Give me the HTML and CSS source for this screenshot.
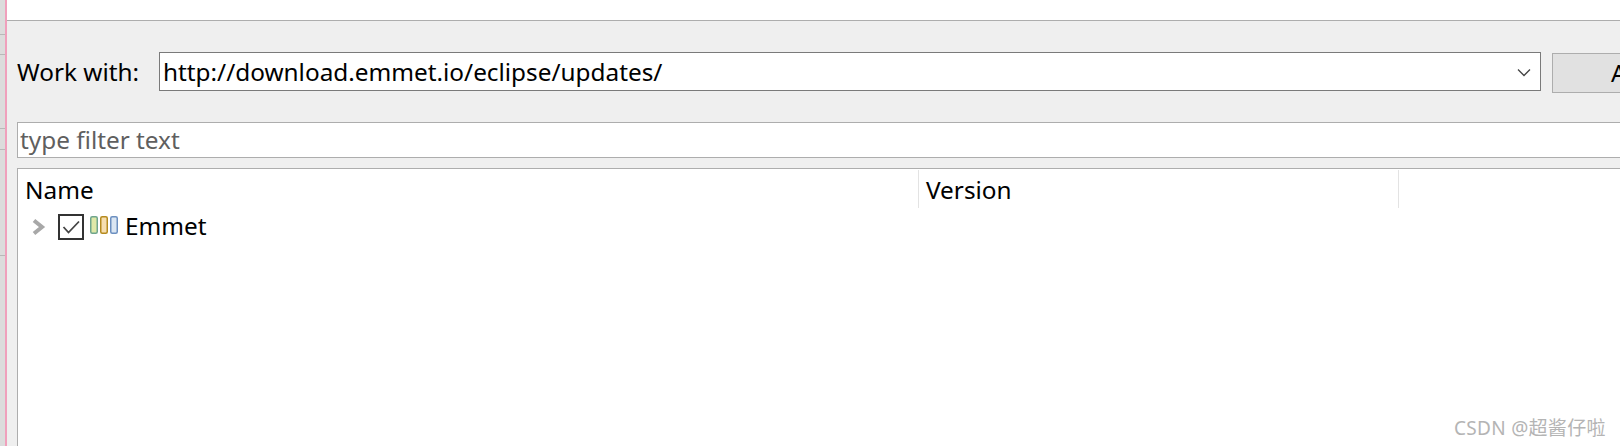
FILE: index.html
```html
<!DOCTYPE html>
<html lang="en">
<head>
    <title>Install</title>
    <meta charset="UTF-8">
    <link rel="stylesheet" href="styles.css">
</head>
<body>
    <div class="rail">
        <div class="notch n1"></div>
        <div class="notch n2"></div>
        <div class="notch n3"></div>
        <div class="notch n4"></div>
        <div class="notch n5"></div>
    </div>
    <div class="main">
        <div class="top"></div>
        <div class="work">
            <span class="work-label">Work with:</span>
            <div class="combo">
                <span class="combo-text">http://download.emmet.io/eclipse/updates/</span>
                <svg class="chevron" width="14" height="9" viewBox="0 0 14 9">
                    <path d="M1 1.5 L7 7.5 L13 1.5" fill="none" stroke="#444" stroke-width="1.3"/>
                </svg>
            </div>
            <div class="add">Add...</div>
        </div>
        <div class="filter">type filter text</div>
        <div class="tree">
            <div class="tree-head">
                <div class="col col-name">Name</div>
                <div class="col col-version">Version</div>
            </div>
            <div class="row">
                <svg class="twisty" width="16" height="18" viewBox="0 0 16 18">
                    <path d="M3 2.5 L11 9 L3 15.5" fill="none" stroke="#a8a8a8" stroke-width="4"/>
                </svg>
                <svg class="check" width="26" height="26" viewBox="0 0 26 26">
                    <rect x="1" y="1" width="24" height="24" fill="#fff" stroke="#333" stroke-width="2"/>
                    <path d="M5.5 13 L10.5 18.5 L21 7.5" fill="none" stroke="#444" stroke-width="1.8"/>
                </svg>
                <svg class="bars" width="28" height="18" viewBox="0 0 28 18">
                    <rect x="0.75" y="0.75" width="6.5" height="16.5" rx="1.5" fill="#dfe8a8" stroke="#6fa58c" stroke-width="1.5"/>
                    <rect x="10.75" y="0.75" width="6.5" height="16.5" rx="1.5" fill="#f6deb0" stroke="#b58a1e" stroke-width="1.5"/>
                    <rect x="20.75" y="0.75" width="6.5" height="16.5" rx="1.5" fill="#dbe6f2" stroke="#6c8fc0" stroke-width="1.5"/>
                </svg>
                <span class="row-text">Emmet</span>
            </div>
        </div>
    </div>
    <div class="watermark">CSDN @超酱仔啦</div>
</body>
</html>
```

FILE: styles.css
```css
html, body{
    margin: 0;
    padding: 0;
    height: 446px;
    overflow: hidden;
}

body{
    position: relative;
    display: flex;
    font-family: "Noto Sans", "Noto Sans CJK SC", sans-serif;
    font-size: 24.35px;
    color: #000000;
    background-color: #efefef;
}

.rail{
    position: relative;
    width: 5px;
    background-color: #dcdcdc;
    border-right: 2px solid #f0a0bc;
    flex: none;
}

.notch{
    position: absolute;
    left: 0;
    width: 5px;
    height: 1px;
    background-color: #b8b8b8;
}

.n1{ top: 34px; }
.n2{ top: 54px; }
.n3{ top: 128px; }
.n4{ top: 149px; }
.n5{ top: 255px; }

.main{
    flex: 1;
    min-width: 0;
    display: flex;
    flex-direction: column;
}

.top{
    height: 20px;
    background-color: #ffffff;
    border-bottom: 1px solid #adadad;
    flex: none;
}

.work{
    height: 101px;
    flex: none;
    display: flex;
    align-items: flex-start;
    padding-left: 10px;
    padding-top: 31px;
    box-sizing: border-box;
}

.work-label{
    width: 142px;
    line-height: 39px;
    flex: none;
}

.combo{
    width: 1382px;
    height: 39px;
    flex: none;
    box-sizing: border-box;
    border: 1px solid #7a7a7a;
    background-color: #ffffff;
    display: flex;
    align-items: center;
    justify-content: space-between;
    padding: 0 9px 0 3px;
    line-height: 37px;
}

.chevron{
    margin-top: 1px;
}

.add{
    width: 120px;
    height: 40px;
    flex: none;
    margin-left: 11px;
    margin-top: 1px;
    box-sizing: border-box;
    border: 1px solid #adadad;
    background-color: #e1e1e1;
    padding-left: 58px;
    line-height: 38px;
    white-space: nowrap;
}

.filter{
    height: 36px;
    flex: none;
    margin-left: 10px;
    box-sizing: border-box;
    border: 1px solid #adadad;
    border-right: none;
    background-color: #ffffff;
    color: #5f5f5f;
    padding-left: 2px;
    line-height: 34px;
}

.tree{
    flex: 1;
    margin-top: 10px;
    margin-left: 10px;
    border-top: 1px solid #adadad;
    border-left: 1px solid #adadad;
    background-color: #ffffff;
}

.tree-head{
    display: flex;
    height: 39px;
    padding-top: 1px;
    box-sizing: border-box;
}

.col{
    box-sizing: border-box;
    border-right: 1px solid #e3e3e3;
    padding-left: 7px;
    line-height: 40px;
    flex: none;
}

.col-name{
    width: 901px;
}

.col-version{
    width: 480px;
}

.row{
    display: flex;
    align-items: center;
    height: 38px;
}

.twisty{
    margin-left: 13px;
    flex: none;
}

.check{
    margin-left: 11px;
    flex: none;
}

.bars{
    margin-left: 6px;
    margin-bottom: 5px;
    flex: none;
}

.row-text{
    margin-left: 7px;
    margin-bottom: 3px;
}

.watermark{
    position: absolute;
    top: 416px;
    left: 1454px;
    font-size: 19px;
    letter-spacing: 0.3px;
    line-height: 24px;
    color: #b4b4b4;
    white-space: nowrap;
}
```
